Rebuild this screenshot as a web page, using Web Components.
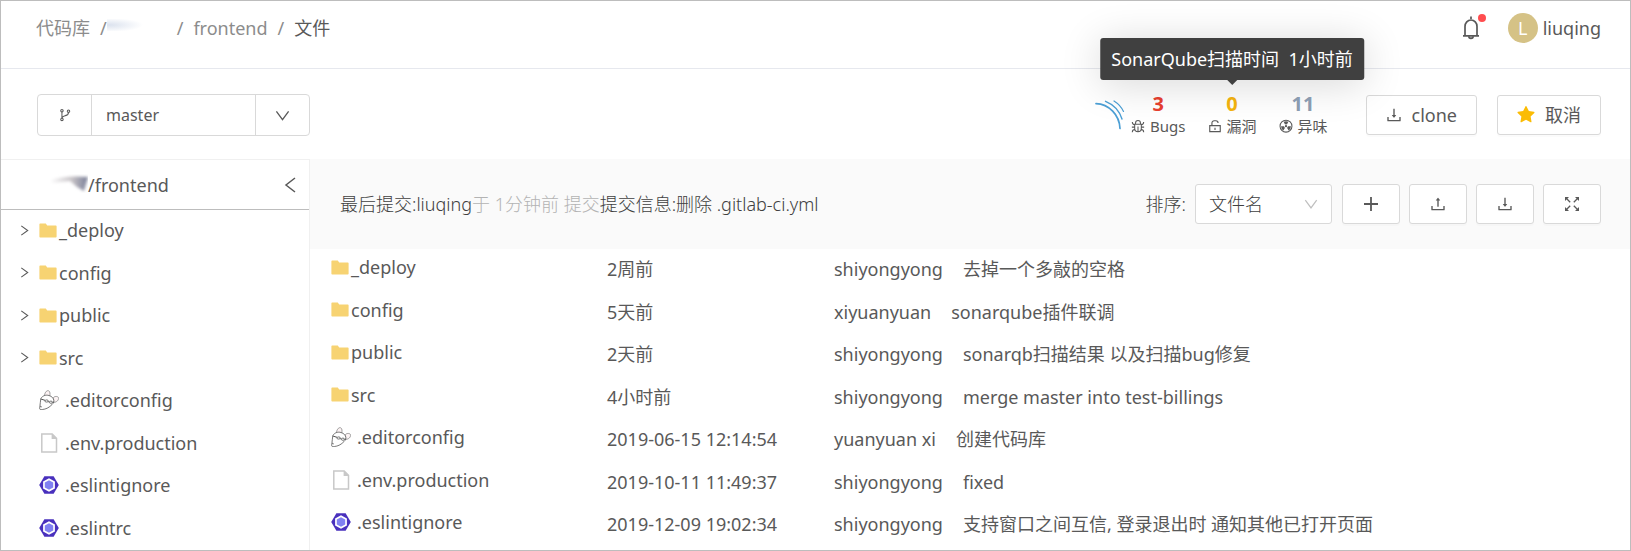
<!DOCTYPE html>
<html lang="zh-CN">
<head>
<meta charset="utf-8">
<title>frontend</title>
<style>
  body {
    margin: 0;
    font-family: "Noto Sans", "Noto Sans CJK SC", sans-serif;
    font-size: 18px;
    line-height: 26px;
    color: #595959;
    background: #fff;
  }
</style>
</head>
<body>
<repo-page></repo-page>

<script>
(function (customElements) {
  const TRAY = 'M878 626h-60c-4.4 0-8 3.6-8 8v154H214V634c0-4.4-3.6-8-8-8h-60c-4.4 0-8 3.6-8 8v198c0 17.7 14.3 32 32 32h684c17.7 0 32-14.3 32-32V634c0-4.4-3.6-8-8-8z';
  const BLADE = 'M6.900 6.300 5.300 3.200a5.600 5.600 0 0 1 5.400 0L9.100 6.300a2.200 2.200 0 0 0-2.200 0z';

  const line = (body, width = 1.4) =>
    `<g fill="none" stroke="currentColor" stroke-width="${width}">${body}</g>`;

  // name: [viewBox, markup]
  const ICONS = {
    branch: ['0 0 16 16', line('<circle cx="4.5" cy="3" r="1.4"/><circle cx="4.5" cy="13" r="1.4"/><circle cx="12" cy="3.6" r="1.4"/><path d="M4.5 4.5v7M12 5c0 3-1.5 3.2-4 3.8-2 .5-3 1-3.4 2.5"/>', 1.2)],
    down: ['0 0 16 16', line('<path d="M1.5 3.5 8 12.5l6.5-9"/>')],
    left: ['0 0 16 16', line('<path d="M13 1 4 8l9 7"/>', 1.5)],
    right: ['0 0 12 12', line('<path d="M2.5 1 9.5 6l-7 5"/>', 1.2)],
    plus: ['0 0 16 16', line('<path d="M8 1v14M1 8h14"/>', 1.8)],
    download: ['64 64 896 896', `<path fill="currentColor" d="M505.7 661a8 8 0 0 0 12.6 0l112-141.7c4.1-5.2.4-12.9-6.3-12.9h-74.1V168c0-4.4-3.6-8-8-8h-60c-4.4 0-8 3.6-8 8v338.3H400c-6.7 0-10.4 7.7-6.3 12.9l112 141.8z${TRAY}"/>`],
    upload: ['64 64 896 896', `<path fill="currentColor" d="M400 317.7h73.9V656c0 4.4 3.6 8 8 8h60c4.4 0 8-3.6 8-8V317.7H624c6.7 0 10.4-7.7 6.3-12.9L518.3 163a8 8 0 0 0-12.6 0l-112 141.7c-4.1 5.3-.4 13 6.3 13z${TRAY}"/>`],
    expand: ['0 0 16 16', `${line('<path d="M2 2l4.200 4.200M14 2 9.800 6.200M2 14l4.200-4.200M14 14 9.800 9.800"/>', 1.3)}<path fill="currentColor" d="M1 1h4L1 5zM15 1v4l-4-4zM1 15v-4l4 4zM15 15h-4l4-4z"/>`],
    star: ['64 64 896 896', '<path fill="currentColor" d="M908.1 353.1l-253.9-36.9L540.7 86.1c-3.1-6.3-8.2-11.4-14.5-14.5-15.8-7.8-35-1.3-42.9 14.5L369.8 316.2l-253.9 36.9c-7 1-13.4 4.3-18.3 9.3a32.05 32.05 0 0 0 .6 45.3l183.7 179.1-43.4 252.9a31.95 31.95 0 0 0 46.4 33.7L512 754l227.1 119.4c6.2 3.3 13.4 4.4 20.3 3.2 17.4-3 29.1-19.5 26.1-36.9l-43.4-252.9 183.7-179.1c5-4.9 8.3-11.3 9.3-18.3 2.7-17.5-9.5-33.7-27-36.3z"/>'],
    bell: ['0 0 22 24', line('<path d="M11 .5v2.500M5 19.500v-9a6 6.500 0 0 1 12 0v9M3 19.800h16"/><path d="M8.800 20.300a2.200 2 0 0 0 4.400 0"/>', 1.7)],
    bug: ['0 0 16 16', line('<path d="M4.200 6h7.600v4.500a3.800 4 0 0 1-7.600 0zM5.200 6V4.500a2.800 2.800 0 0 1 5.600 0V6M8 8.500v6M1 9.300h3.200M11.800 9.300H15M1.500 3.500c0 2 .8 3 2.700 3.200M14.500 3.500c0 2-.8 3-2.700 3.200M1.500 15c0-2 1-2.900 3-3.200M14.500 15c0-2-1-2.900-3-3.200"/>', 1.200)],
    unlock: ['0 0 16 16', line('<path d="M2 7.500h12v7H2zM4.500 7.500v-3a2.500 2.500 0 0 1 2.500-2.500h2a2.500 2.500 0 0 1 2.500 2.500M8 10v2.500"/>', 1.300)],
    smell: ['0 0 16 16', `${line('<circle cx="8" cy="8.200" r="6.800"/>', 1.200)}<g fill="currentColor"><circle cx="8" cy="8.200" r="1.300"/><path d="${BLADE}"/><path transform="rotate(120 8 8.200)" d="${BLADE}"/><path transform="rotate(240 8 8.200)" d="${BLADE}"/></g>`],
    sonar: ['0 0 30 30', '<g fill="none" stroke="#4b9fd5" stroke-linecap="round"><path stroke-width="1.700" d="M1 3.600C14 4 24.500 15 25 28.500"/><path stroke-width="1.400" d="M10.500 1.300C18.500 4.500 24.500 11 27 19"/><path stroke-width="1.200" d="M19 1c4.500 2.800 7.500 6.200 9.500 10.500"/></g>'],
    folder: ['0 0 18 15', '<path fill="#f7d372" d="M1.200.5h5.600L8.200 2.500h8.600q.8 0 .8.8v10.400q0 .8-.8.8H1.200q-.8 0-.8-.8V1.300Q.4.500 1.200.5z"/>'],
    file: ['0 0 20 20', '<path fill="#fff" stroke="#c8c8c8" stroke-width="1.500" d="M2.800.9h10.400l4.300 4.300v13.900H2.800z"/><path fill="#c8c8c8" d="M12.600.5 18 6h-5.400z"/>'],
    eslint: ['0 0 20 20', '<path fill="#4930bd" d="M5.400 1.200h9.200L19.800 10l-5.200 8.800H5.400L.2 10z"/><path fill="#fff" d="M10 3.300 15.900 6.600v6.800L10 16.700 4.100 13.400V6.600z"/><path fill="#8080f2" d="M10 5.200l4.200 2.400v4.800L10 14.800l-4.200-2.400V7.600z"/>'],
    mouse: ['0 0 20 20', `<g fill="#fff" stroke="#555" stroke-width=".8">
      <path stroke="#888" fill="#fcf3f4" d="M5.500 6C5.500 3 7.500.2 9.400.7c2 .7 1.800 3.300 1.200 6z"/>
      <path stroke="#888" fill="#fcf3f4" d="M14 8.300c.8-2.200 4.800-2.500 5.500-.6.600 2.200-2 4.800-4.700 4.600z"/>
      <path d="M1.800 8.700C3.500 5.500 7 4.600 10 5.500c2.800.8 4.800 2.800 4.900 5.200 0 2.200-1.600 3.600-3 4.900-2.200 2.100-5 3.600-8.500 3.900-1.600.2-2.700 0-2.700-.8.300-2 .200-4 .600-6z"/>
      <path stroke-width="1" d="M1.800 9 6 10.300M9.200 11.600l1 .3M13.500 12.500l1.300-.3"/>
      <ellipse cx="7.600" cy="11" rx="1.700" ry="1.100"/><ellipse cx="11.900" cy="12.200" rx="1.600" ry="1.100"/>
      <path d="M1 16 2.800 17"/></g>`],
  };

  const define = (tag, html, setup) => {
    const template = document.createElement('template');
    template.innerHTML = html;

    customElements.define(tag, class extends HTMLElement {
      connectedCallback() {
        if (this.shadowRoot) return;
        this.attachShadow({ mode: 'open' });
        this.shadowRoot.appendChild(template.content.cloneNode(true));
        if (setup) setup(this, this.shadowRoot);
      }
    });
  };

  define('ui-icon', `
    <style>
      :host { display: inline-flex; flex: none; width: 16px; height: 16px; }
      svg { width: 100%; height: 100%; }
    </style>
    <svg aria-hidden="true"></svg>
  `, (host, root) => {
    const [viewBox, markup] = ICONS[host.getAttribute('name')];
    const svg = root.querySelector('svg');
    svg.setAttribute('viewBox', viewBox);
    svg.innerHTML = markup;
  });

  define('ui-button', `
    <style>
      :host { display: block; flex: none; }
      button {
        display: flex;
        align-items: center;
        justify-content: center;
        gap: 10px;
        min-width: 58px;
        height: 40px;
        padding: 0 19px;
        box-sizing: border-box;
        border: 1px solid #d9d9d9;
        border-radius: 3px;
        background: #fff;
        box-shadow: 0 2px 0 rgba(0, 0, 0, 0.015);
        color: inherit;
        font: inherit;
        cursor: pointer;
      }
    </style>
    <button type="button"><slot></slot></button>
  `, (host, root) => {
    const label = host.getAttribute('label');
    if (label) root.querySelector('button').setAttribute('aria-label', label);
  });

  define('page-header', `
    <style>
      :host {
        display: flex;
        justify-content: space-between;
        padding: 12px 29px 25px 35px;
        border-bottom: 1px solid #e6e8ee;
      }
      nav, .user, a { display: flex; align-items: center; }
      nav { gap: 10px; color: #8c8c8c; }
      a { color: inherit; text-decoration: none; }
      .current { color: #595959; }
      .smudge {
        width: 60px;
        height: 12px;
        margin: 0 0 6px -10px;
        background: radial-gradient(ellipse 34px 7px at 2px 6px, #dbe2ee, #fff);
      }
      .user { gap: 26px; }
      .user a { gap: 5px; }
      .bell {
        position: relative;
        display: flex;
        padding: 0;
        border: 0;
        background: none;
        color: inherit;
      }
      .bell ui-icon { width: 22px; height: 24px; }
      .bell i {
        position: absolute;
        top: -2px;
        right: -4px;
        width: 8px;
        height: 8px;
        border-radius: 50%;
        background: #ff4d4f;
      }
      .avatar {
        width: 30px;
        height: 30px;
        border-radius: 50%;
        background: #d5c286;
        color: #fff;
        line-height: 30px;
        text-align: center;
      }
    </style>
    <nav aria-label="breadcrumb">
      <a href="#">代码库</a><span>/</span><span class="smudge"></span><span>/</span>
      <a href="#">frontend</a><span>/</span><span class="current">文件</span>
    </nav>
    <div class="user">
      <button class="bell" type="button" aria-label="通知"><ui-icon name="bell"></ui-icon><i></i></button>
      <a href="#"><span class="avatar">L</span>liuqing</a>
    </div>
  `);

  define('branch-picker', `
    <style>
      :host {
        display: flex;
        width: 273px;
        height: 42px;
        box-sizing: border-box;
        border: 1px solid #d9d9d9;
        border-radius: 4px;
        background: #fff;
      }
      label, .arrow { display: flex; align-items: center; justify-content: center; width: 53px; }
      label { border-right: 1px solid #d9d9d9; }
      label ui-icon { width: 14px; height: 14px; }
      /* the arrow cell lies over the right end of the select */
      .arrow {
        margin-left: -54px;
        border-left: 1px solid #d9d9d9;
        pointer-events: none;
      }
      .arrow ui-icon { width: 15px; height: 15px; }
      select {
        flex: 1;
        appearance: none;
        padding: 0 14px;
        border: 0;
        background: none;
        color: inherit;
        font: inherit;
        font-size: 16px;
      }
    </style>
    <label for="branch" aria-label="分支"><ui-icon name="branch"></ui-icon></label>
    <select id="branch"><option>master</option></select>
    <span class="arrow"><ui-icon name="down"></ui-icon></span>
  `);

  define('sonar-stat', `
    <style>
      :host { display: block; position: relative; text-align: center; line-height: 22px; }
      .count { display: block; color: var(--count-color); font-size: 20px; font-weight: 700; }
      .label { display: flex; align-items: center; gap: 5px; font-size: 15px; }
      .label ui-icon { width: 14px; height: 14px; }
      ::slotted([slot="tip"]) {
        position: absolute;
        bottom: calc(100% + 13px);
        left: 50%;
        transform: translateX(-50%);
      }
    </style>
    <slot name="tip"></slot>
    <span class="count"></span>
    <span class="label"><slot></slot></span>
  `, (host, root) => {
    root.querySelector('.count').textContent = host.getAttribute('count');
    root.querySelector('.label')
      .insertAdjacentHTML('afterbegin', `<ui-icon name="${host.getAttribute('icon')}"></ui-icon>`);
  });

  define('ui-tooltip', `
    <style>
      :host {
        display: block;
        padding: 8px 11px;
        border-radius: 3px;
        background: #404040;
        box-shadow: 0 4px 40px rgba(0, 0, 0, 0.16);
        color: #fff;
        font-size: 18px;
        line-height: 26px;
        text-align: left;
        white-space: nowrap;
      }
      :host::after {
        content: "";
        position: absolute;
        top: 100%;
        left: calc(50% - 5px);
        border: 5px solid transparent;
        border-top-color: #404040;
        border-bottom: 0;
      }
    </style>
    <slot></slot>
  `);

  define('repo-bar', `
    <style>
      :host {
        display: flex;
        align-items: center;
        justify-content: space-between;
        padding: 24px 29px 22px 36px;
      }
      .right, .stats { display: flex; align-items: center; }
      .right { gap: 20px; }
      .stats { gap: 22px; margin-right: 18px; }
      .logo { width: 30px; height: 30px; margin-right: -16px; }
      .star { width: 18px; height: 18px; color: #fbbc05; }
    </style>
    <branch-picker></branch-picker>
    <div class="right">
      <div class="stats">
        <ui-icon class="logo" name="sonar"></ui-icon>
        <sonar-stat count="3" icon="bug" style="--count-color: #e8402f">Bugs</sonar-stat>
        <sonar-stat count="0" icon="unlock" style="--count-color: #f5b40f">漏洞<ui-tooltip slot="tip" role="tooltip">SonarQube扫描时间&nbsp; 1小时前</ui-tooltip></sonar-stat>
        <sonar-stat count="11" icon="smell" style="--count-color: #8a9bb0">异味</sonar-stat>
      </div>
      <ui-button><ui-icon name="download"></ui-icon>clone</ui-button>
      <ui-button><ui-icon class="star" name="star"></ui-icon>取消</ui-button>
    </div>
  `);

  const TREE = [
    ['folder', '_deploy'],
    ['folder', 'config'],
    ['folder', 'public'],
    ['folder', 'src'],
    ['mouse', '.editorconfig'],
    ['file', '.env.production'],
    ['eslint', '.eslintignore'],
    ['eslint', '.eslintrc'],
  ];

  define('file-name', `
    <style>
      :host { display: block; }
      a { display: flex; align-items: center; gap: 6px; color: inherit; text-decoration: none; }
      a.folder { gap: 2px; }
      ui-icon { width: 20px; height: 20px; }
      .folder ui-icon { width: 18px; height: 15px; }
    </style>
    <a href="#"><slot></slot></a>
  `, (host, root) => {
    const type = host.getAttribute('type');
    const link = root.querySelector('a');
    link.className = type;
    link.insertAdjacentHTML('afterbegin', `<ui-icon name="${type}"></ui-icon>`);
  });

  define('file-tree', `
    <style>
      :host { display: block; border-top: 1px solid #f0f0f0; border-right: 1px solid #f0f0f0; }
      header {
        display: flex;
        align-items: center;
        height: 49px;
        padding: 0 11px 0 45px;
        border-bottom: 1px solid #bdbdbd;
      }
      header svg { width: 42px; height: 26px; }
      header button { display: flex; margin-left: auto; padding: 0; border: 0; background: none; color: inherit; }
      ul { margin: 0; padding: 0; list-style: none; }
      li {
        display: flex;
        align-items: center;
        gap: 9px;
        height: 42px;
        padding: 0 0 2px 18px;
        box-sizing: border-box;
      }
      li:nth-child(even) { height: 43px; }
      .toggle { width: 11px; height: 11px; }
    </style>
    <header>
      <svg viewBox="0 0 42 26" aria-hidden="true">
        <defs>
          <filter id="soft"><feGaussianBlur stdDeviation="1.5"/></filter>
          <linearGradient id="fade"><stop offset="0" stop-color="#fff"/><stop offset=".6" stop-color="#c4c0c4"/><stop offset="1" stop-color="#777c96"/></linearGradient>
        </defs>
        <path d="M4 8Q20 3 42 5L38 19Q30 15 24 9L6 11z" fill="url(#fade)" filter="url(#soft)"/>
      </svg>
      <span>/frontend</span>
      <button type="button" aria-label="收起"><ui-icon name="left"></ui-icon></button>
    </header>
    <ul></ul>
  `, (host, root) => {
    root.querySelector('ul').innerHTML = TREE.map(([type, name]) => `
      <li>
        ${type === 'folder' ? '<ui-icon class="toggle" name="right"></ui-icon>' : '<span class="toggle"></span>'}
        <file-name type="${type}">${name}</file-name>
      </li>`).join('');
  });

  define('file-toolbar', `
    <style>
      :host {
        display: flex;
        align-items: center;
        gap: 9px;
        height: 90px;
        padding: 0 29px 0 30px;
        background: #fafafa;
        font-weight: 300;
      }
      p { flex: 1; margin: 0; }
      p, label, select { color: #404040; }
      .muted { color: #b3b3b3; }
      .select { display: flex; align-items: center; margin-right: 15px; }
      .select ui-icon { width: 14px; height: 14px; margin-left: -28px; color: #bfbfbf; pointer-events: none; }
      select {
        width: 137px;
        height: 40px;
        appearance: none;
        padding: 0 13px;
        border: 1px solid #d9d9d9;
        border-radius: 3px;
        background: #fff;
        font: inherit;
      }
    </style>
    <p>最后提交:liuqing<span class="muted">于 1分钟前 提交</span>提交信息:删除 .gitlab-ci.yml</p>
    <label for="sort">排序:</label>
    <span class="select">
      <select id="sort"><option>文件名</option></select>
      <ui-icon name="down"></ui-icon>
    </span>
    <ui-button label="新建"><ui-icon name="plus"></ui-icon></ui-button>
    <ui-button label="上传"><ui-icon name="upload"></ui-icon></ui-button>
    <ui-button label="下载"><ui-icon name="download"></ui-icon></ui-button>
    <ui-button label="全屏"><ui-icon name="expand"></ui-icon></ui-button>
  `);

  const COMMITS = [
    ['2周前', 'shiyongyong', '去掉一个多敲的空格'],
    ['5天前', 'xiyuanyuan', 'sonarqube插件联调'],
    ['2天前', 'shiyongyong', 'sonarqb扫描结果 以及扫描bug修复'],
    ['4小时前', 'shiyongyong', 'merge master into test-billings'],
    ['2019-06-15 12:14:54', 'yuanyuan xi', '创建代码库'],
    ['2019-10-11 11:49:37', 'shiyongyong', 'fixed'],
    ['2019-12-09 19:02:34', 'shiyongyong', '支持窗口之间互信, 登录退出时 通知其他已打开页面'],
  ];

  define('file-table', `
    <style>
      :host { display: block; padding-left: 21px; }
      table { width: 100%; border-collapse: collapse; table-layout: fixed; }
      tr { height: 42px; }
      tr:nth-child(even) { height: 43px; }
      td { padding: 0 0 2px; white-space: nowrap; }
      .name { width: 276px; padding-bottom: 6px; }
      .date { width: 227px; }
      .author { margin-right: 20px; }
    </style>
    <table><tbody></tbody></table>
  `, (host, root) => {
    root.querySelector('tbody').innerHTML = COMMITS.map(([date, author, message], i) => `
      <tr>
        <td class="name"><file-name type="${TREE[i][0]}">${TREE[i][1]}</file-name></td>
        <td class="date">${date}</td>
        <td><span class="author">${author}</span>${message}</td>
      </tr>`).join('');
  });

  define('repo-page', `
    <style>
      :host {
        display: block;
        min-height: 100vh;
        box-sizing: border-box;
        border: 1px solid #bdbdbd;
      }
      .body { display: grid; grid-template-columns: 309px 1fr; }
    </style>
    <page-header></page-header>
    <repo-bar></repo-bar>
    <div class="body">
      <file-tree></file-tree>
      <main>
        <file-toolbar></file-toolbar>
        <file-table></file-table>
      </main>
    </div>
  `);
})(window.customElements);
</script>
</body>
</html>
